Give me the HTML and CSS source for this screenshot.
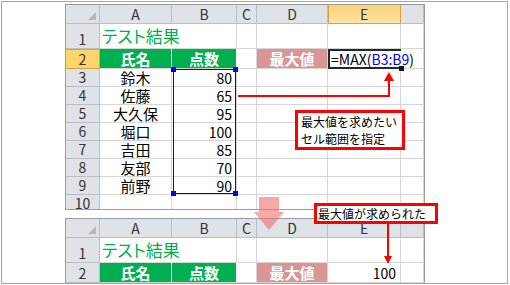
FILE: index.html
```html
<!DOCTYPE html>
<html lang="ja">
<head>
    <meta charset="UTF-8">
    <title>MAX関数</title>
    <link rel="stylesheet" href="styles.css">
</head>
<body>
    <div class="frame">
        <!-- before: formula being entered -->
        <div class="sheet sheet-top">
            <div class="hd corner"></div>
            <div class="hd">A</div>
            <div class="hd">B</div>
            <div class="hd">C</div>
            <div class="hd">D</div>
            <div class="hd hd-col-sel">E</div>
            <div class="hd"></div>

            <div class="hd rh">1</div>
            <div class="c title">テスト結果</div>
            <div class="c"></div><div class="c"></div><div class="c"></div><div class="c"></div><div class="c"></div>

            <div class="hd rh rh-sel">2</div>
            <div class="c green">氏名</div>
            <div class="c green">点数</div>
            <div class="c"></div>
            <div class="c pink">最大値</div>
            <div class="c active">=MAX(<span class="ref">B3:B9</span>)</div>
            <div class="c"></div>

            <div class="hd rh">3</div><div class="c name">鈴木</div><div class="c num">80</div><div class="c"></div><div class="c"></div><div class="c"></div><div class="c"></div>
            <div class="hd rh">4</div><div class="c name">佐藤</div><div class="c num">65</div><div class="c"></div><div class="c"></div><div class="c"></div><div class="c"></div>
            <div class="hd rh">5</div><div class="c name">大久保</div><div class="c num">95</div><div class="c"></div><div class="c"></div><div class="c"></div><div class="c"></div>
            <div class="hd rh">6</div><div class="c name">堀口</div><div class="c num">100</div><div class="c"></div><div class="c"></div><div class="c"></div><div class="c"></div>
            <div class="hd rh">7</div><div class="c name">吉田</div><div class="c num">85</div><div class="c"></div><div class="c"></div><div class="c"></div><div class="c"></div>
            <div class="hd rh">8</div><div class="c name">友部</div><div class="c num">70</div><div class="c"></div><div class="c"></div><div class="c"></div><div class="c"></div>
            <div class="hd rh">9</div><div class="c name">前野</div><div class="c num">90</div><div class="c"></div><div class="c"></div><div class="c"></div><div class="c"></div>
            <div class="hd rh">10</div><div class="c"></div><div class="c"></div><div class="c"></div><div class="c"></div><div class="c"></div><div class="c"></div>

            <div class="range">
                <span class="grip grip-tl"></span>
                <span class="grip grip-tr"></span>
                <span class="grip grip-bl"></span>
                <span class="grip grip-br"></span>
            </div>
        </div>

        <!-- after: result -->
        <div class="sheet sheet-bottom">
            <div class="hd corner"></div>
            <div class="hd">A</div>
            <div class="hd">B</div>
            <div class="hd">C</div>
            <div class="hd">D</div>
            <div class="hd">E</div>
            <div class="hd"></div>

            <div class="hd rh">1</div>
            <div class="c title">テスト結果</div>
            <div class="c"></div><div class="c"></div><div class="c"></div><div class="c"></div><div class="c"></div>

            <div class="hd rh">2</div>
            <div class="c green">氏名</div>
            <div class="c green">点数</div>
            <div class="c"></div>
            <div class="c pink">最大値</div>
            <div class="c num">100</div>
            <div class="c"></div>
        </div>

        <svg class="arrows" viewBox="2 2 505 281" width="505" height="281">
            <path d="M238 96 H389 V81" fill="none" stroke="#ff0000" stroke-width="2"/>
            <polygon points="384,81 394,81 389,72" fill="#ff0000"/>
            <polygon class="down" points="259,197 279,197 279,212 284,212 269,230 254,212 259,212"/>
            <path d="M388 223 V257" fill="none" stroke="#ff0000" stroke-width="2"/>
            <polygon points="384,256 392,256 388,264" fill="#ff0000"/>
        </svg>

        <div class="note note-range">最大値を求めたい<br>セル範囲を指定</div>
        <div class="note note-result">最大値が求められた</div>
    </div>
</body>
</html>
```

FILE: styles.css
```css
body {
    margin: 0;
    background: #fff;
    font-family: "Noto Sans CJK JP", "Noto Sans", sans-serif;
    color: #000;
}

.frame {
    position: relative;
    box-sizing: border-box;
    width: 507px;
    height: 283px;
    margin: 1px;
    padding: 2px 0 0 63px;
    border: 1px solid #a6a6a6;
    overflow: hidden;
}

.sheet {
    position: relative;
    display: grid;
    grid-template-columns: 34px 72px 65px 20px 71px 73px 23px;
    width: 358px;
    border: 1px solid #9c9c9c;
    background: #fff;
}

.sheet-top {
    grid-template-rows: 19px 25px 20px repeat(8, 18px);
    height: 204px;
    overflow: hidden;
}

.sheet-bottom {
    grid-template-rows: 19px 25px 20px;
    margin-top: 8px;
}

.sheet > div {
    box-sizing: border-box;
    display: flex;
    align-items: center;
    min-width: 0;
    white-space: nowrap;
    line-height: 16px;
}

/* headers */
.hd {
    background: #dfe2e7;
    border-right: 1px solid #b9bec5;
    border-bottom: 1px solid #b9bec5;
    justify-content: center;
    font-size: 14px;
    color: #333;
}

.rh {
    align-items: flex-end !important;
    padding-bottom: 1px;
}

.corner {
    position: relative;
}

.corner::after {
    content: "";
    position: absolute;
    right: 3px;
    bottom: 3px;
    border-left: 8px solid transparent;
    border-bottom: 8px solid #b3b7be;
}

.hd-col-sel {
    background: linear-gradient(#f8d477, #fce5a6);
    border-color: #e39d3d;
    box-shadow: inset 1px 0 #e39d3d;
}

.rh-sel {
    background: #fcd66c;
    border-color: #e39d3d;
    box-shadow: inset 0 1px #e39d3d;
}

/* cells */
.c {
    border-right: 1px solid #d6d6d6;
    border-bottom: 1px solid #d6d6d6;
    font-size: 14px;
}

.sheet > .title {
    overflow: visible;
    border-right-color: transparent;
    padding-left: 2px;
    padding-bottom: 2px;
    color: #00b050;
    font-size: 17px;
    font-feature-settings: "palt";
    align-items: flex-end;
    line-height: 20px;
}

.green {
    justify-content: center;
    background: #00b050;
    border-right-color: #fff !important;
    color: #fff;
    font-weight: bold;
    font-size: 15px;
}

.pink {
    justify-content: center;
    background: #da9694;
    color: #fff;
    font-weight: bold;
    font-size: 15px;
}

.name {
    justify-content: center;
    font-size: 15px;
}

.num {
    justify-content: flex-end;
    padding-right: 4px;
}

.active {
    position: relative;
    overflow: visible;
    padding-left: 1px;
    border: 2px solid #1f2a2a !important;
    border-right: none !important;
}

.active::after {
    content: "";
    position: absolute;
    right: -3px;
    bottom: -4px;
    width: 5px;
    height: 5px;
    background: #111;
}

.ref {
    color: #0000ff;
}

/* selected range B3:B9, laid over the cells */
.sheet > .range {
    position: absolute;
    grid-column: 3 / 4;
    grid-row: 4 / 11;
    top: 0;
    right: 1px;
    bottom: 1px;
    left: 1px;
    border: 1px solid #0000ff;
}

.grip {
    position: absolute;
    width: 5px;
    height: 5px;
    background: #0000ff;
}

.grip-tl { left: -3px; top: -3px; }
.grip-tr { right: -3px; top: -3px; }
.grip-bl { left: -3px; bottom: -3px; }
.grip-br { right: -3px; bottom: -3px; }

/* arrows and notes */
.arrows {
    position: absolute;
    left: 0;
    top: 0;
}

.down {
    fill: #ee6e6e;
    opacity: 0.6;
}

.note {
    position: absolute;
    box-sizing: border-box;
    border: 3px solid #ff0000;
    background: #fff;
    font-size: 12px;
    white-space: nowrap;
}

.note-range {
    left: 293px;
    top: 108px;
    width: 110px;
    height: 40px;
    padding: 0 3px;
    line-height: 17px;
}

.note-result {
    left: 312px;
    top: 201px;
    width: 124px;
    height: 21px;
    padding: 0 1px;
    line-height: 15px;
}
```
